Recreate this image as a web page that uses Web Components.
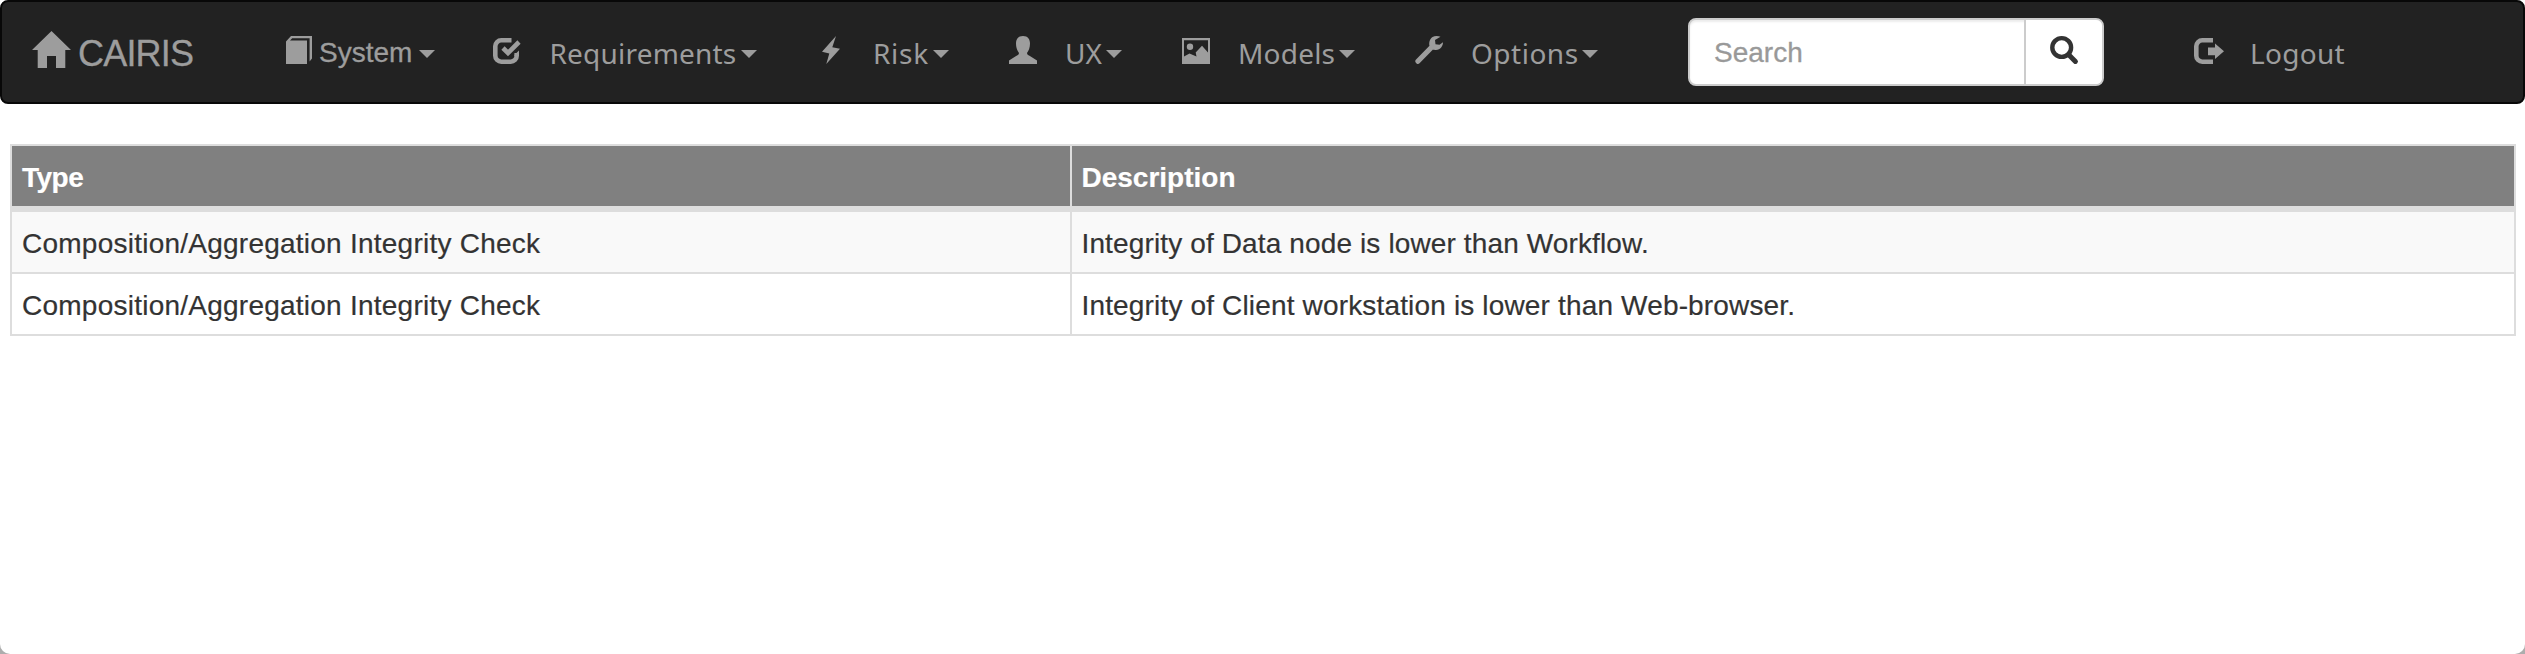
<!DOCTYPE html>
<html lang="en"><head><meta charset="utf-8"><title>CAIRIS</title>
<style>
html{background:linear-gradient(#fff 0 50%,#adadad 50%);height:100%;overflow:hidden}
body{margin:0;height:654px;background:#fff;border-radius:4px 4px 10px 10px;overflow:hidden;font:28px/40px "Liberation Sans",Arial,sans-serif;color:#333}
</style></head><body>
<cairis-navbar>
<nav-brand>CAIRIS</nav-brand>
<nav-item plain icon="book" style="--gap:5px;--label:99.5px">System</nav-item>
<nav-item icon="check" style="--gap:28.5px;--label:191.5px;--ls:.2px">Requirements</nav-item>
<nav-item icon="bolt" style="--gap:25px;--label:60px;--ls:.7px">Risk</nav-item>
<nav-item icon="user" style="--gap:28px;--label:41px;--ls:0px">UX</nav-item>
<nav-item icon="image" style="--gap:28px;--label:101px;--ls:.2px">Models</nav-item>
<nav-item icon="wrench" style="--gap:28px;--label:111px;--ls:.5px">Options</nav-item>
<nav-search placeholder="Search"></nav-search>
<nav-item nocaret icon="logout" style="--gap:28px;--label:110px;--ls:.3px">Logout</nav-item>
</cairis-navbar>
<check-table>
<check-row head><span style="letter-spacing:-.5px">Type</span><span slot="description">Description</span></check-row>
<check-row striped><span style="letter-spacing:.24px">Composition/Aggregation Integrity Check</span><span slot="description" style="letter-spacing:.13px">Integrity of Data node is lower than Workflow.</span></check-row>
<check-row><span style="letter-spacing:.24px">Composition/Aggregation Integrity Check</span><span slot="description" style="letter-spacing:.16px">Integrity of Client workstation is lower than Web-browser.</span></check-row>
</check-table>
<script>
const icons={
book:'<path d="M0 5.5L5 0H26V22.500L23.600 25.500V2.200H6.200L4 4.500H21V28H0Z"/>',
check:'<g fill="none" stroke="currentColor" stroke-width="4.600"><path d="M18.500 4.300H8.300A6 6 0 0 0 2.300 10.300V19.700A6 6 0 0 0 8.300 25.700H17.700A6 6 0 0 0 23.700 19.700V17"/><path d="M10 12L15 17L26 6"/></g><path d="M21.400 19L26 14.500V20H21.400Z"/>',
bolt:'<path d="M16 0L12.300 11.200L20 12.700L6.300 28L9.300 17.500L2 15.800Z"/>',
user:'<path d="M14 0C9 0 7 3.500 7 7.500C7 12 8.500 15 10 17C9.800 18.500 9 19 7.500 19.800L0 24.500V28H28V24.500L20.500 19.800C19 19 18.200 18.500 18 17C19.500 15 21 12 21 7.500C21 3.500 19 0 14 0Z"/>',
image:'<path fill-rule="evenodd" d="M0 2H28V28H0ZM2 4.300V20.500L7.500 17.500L14.500 20.500L13.700 16.500L20 9.700L26 16.500V4.300Z"/><circle cx="8" cy="10.700" r="3.200"/>',
wrench:'<path d="M25.500.8L20 4L20.500 8.300L24.500 8.800L28 6.300C28 10 25.500 14 21 14C19.500 14 18.500 13.700 18 13.500L4.500 27.300C3.500 28.300 2.500 28.300 1.300 27.200C0 26 0 24.700.8 23.700L14.500 9.800C14 8.500 13.800 3.500 17.500 1C20-.6 23.500-.2 25.500.8Z"/>',
logout:'<path fill="none" stroke="currentColor" stroke-width="4.600" d="M19 4.300H8.300A6 6 0 0 0 2.300 10.300V19.700A6 6 0 0 0 8.300 25.700H19"/><path d="M14 11.500H21V7.500L30 15.300L21 23V19.300H14Z"/>',
search:'<g fill="none" stroke="currentColor"><circle cx="11.700" cy="11.500" r="9.400" stroke-width="4.400"/><path stroke-width="5" stroke-linecap="round" d="M18.500 18.500L25.400 25.400"/></g>'};
const svg=n=>`<svg width="28" height="28" viewBox="0 0 28 28" fill="currentColor" overflow="visible">${icons[n]}</svg>`;
const define=(name,render)=>customElements.define(name,class extends HTMLElement{
 constructor(){super();this.attachShadow({mode:'open'})}
 connectedCallback(){this.shadowRoot.innerHTML=render(this)}
});
define('cairis-navbar',()=>`<style>:host{display:grid;box-sizing:border-box;height:104px;padding-left:30px;grid-template-columns:254px 207px 327px 189px 173px 233px 273px 506px auto;background:#222;border:2px solid #080808;border-radius:8px;color:#9d9d9d}</style><slot></slot>`);
define('nav-brand',()=>`<style>:host{display:flex;font-size:36px;line-height:40px;letter-spacing:-.8px;-webkit-text-stroke:.3px}svg{margin:29px 7px 0 0}span{margin-top:32px}</style><svg width="39" height="37" viewBox="0 0 39 37" fill="currentColor"><path d="M19.500 0L39 19H33.300V37H24V25H15V37H5.700V19H0Z"/></svg><span><slot></slot></span>`);
define('nav-item',e=>`<style>:host{display:grid;grid-template-columns:28px calc(var(--gap) + var(--label)) 16px;align-items:start;font-family:"Noto Sans","Open Sans",sans-serif;letter-spacing:var(--ls,0);white-space:nowrap}:host([plain]){font-family:"Liberation Sans",Arial,sans-serif;-webkit-text-stroke:.3px}svg{margin-top:34px}span{padding-left:var(--gap);margin-top:31px}i{margin-top:48px;border:8px solid transparent;border-top-color:currentColor;border-bottom:0;width:0;height:0}:host([nocaret]) i{display:none}</style>${svg(e.getAttribute('icon'))}<span><slot></slot></span><i></i>`);
define('nav-search',e=>`<style>:host{display:flex;box-sizing:border-box;width:416px;height:68px;margin-top:16px;background:#fff;border:2px solid #ccc;border-radius:8px;box-shadow:inset 0 2px 2px rgba(0,0,0,.075);color:#333}span{box-sizing:border-box;width:334px;padding:13px 0 0 24px;color:#999;-webkit-text-stroke:.3px}button{flex:1;padding:0;border:0;border-left:2px solid #ccc;background:#fff;border-radius:0 6px 6px 0;color:inherit;display:flex;justify-content:center;align-items:flex-start}svg{margin-top:16px}</style><span>${e.getAttribute('placeholder')}</span><button aria-label="Search">${svg('search')}</button>`);
define('check-table',()=>`<style>:host{display:block;width:2502px;margin:40px 0 0 10px;border:2px solid #ddd;-webkit-text-stroke:.2px}</style><slot></slot>`);
define('check-row',()=>`<style>:host{display:grid;grid-template-columns:1058px 2px 1fr;height:60px;border-top:2px solid #ddd}:host([head]){border-top:0;border-bottom:4px solid #ddd;background:#808080;color:#fff;font-weight:700}:host([striped]){background:#f9f9f9}div{padding:12px 10px 0}div:last-child{padding-left:9.5px}i{background:#ddd}</style><div><slot></slot></div><i></i><div><slot name="description"></slot></div>`);
</script></body></html>
